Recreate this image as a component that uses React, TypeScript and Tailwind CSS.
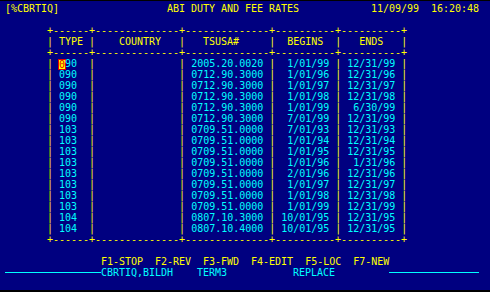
import React from "react";

type Kind = "y" | "c" | "cur" | "lineL" | "lineR";
type Seg = [number, string, Kind];

function Line({ segs }: { segs: Seg[] }) {
  const out: React.ReactNode[] = [];
  let col = 0;
  segs.forEach(([c, t, k], i) => {
    if (c > col) {
      out.push(<span key={"s" + i}>{" ".repeat(c - col)}</span>);
      col = c;
    }
    if (k === "y") {
      out.push(
        <span key={i} className="text-[#ffff00]">
          {t}
        </span>
      );
      col += t.length;
    } else if (k === "c") {
      out.push(
        <span key={i} className="text-[#00ffff]">
          {t}
        </span>
      );
      col += t.length;
    } else if (k === "cur") {
      out.push(
        <span
          key={i}
          className="inline-block w-[6px] h-[9px] leading-[9px] bg-[#ffff00] text-[#e00000] outline outline-1 outline-[#e00000] align-[-1px] text-center"
        >
          {t}
        </span>
      );
      col += 1;
    } else if (k === "lineL") {
      out.push(
        <span key={i} className="inline-block w-[96px] h-px bg-[#00ffff] align-[3px]" />
      );
      col += 16;
    } else {
      out.push(
        <span key={i} className="inline-block w-[90px] h-px bg-[#00ffff] align-[3px]" />
      );
      col += 15;
    }
  });
  return <div className="h-[11px] leading-[11px] whitespace-pre">{out}</div>;
}

const border: Seg[] = [
  [8, "+------+--------------+--------------+----------+----------+", "y"],
];

const rows: [string, string, string, string][] = [
  ["090", "2005.20.0020", "1/01/99", "12/31/99"],
  ["090", "0712.90.3000", "1/01/96", "12/31/96"],
  ["090", "0712.90.3000", "1/01/97", "12/31/97"],
  ["090", "0712.90.3000", "1/01/98", "12/31/98"],
  ["090", "0712.90.3000", "1/01/99", "6/30/99"],
  ["090", "0712.90.3000", "7/01/99", "12/31/99"],
  ["103", "0709.51.0000", "7/01/93", "12/31/93"],
  ["103", "0709.51.0000", "1/01/94", "12/31/94"],
  ["103", "0709.51.0000", "1/01/95", "12/31/95"],
  ["103", "0709.51.0000", "1/01/96", "1/31/96"],
  ["103", "0709.51.0000", "2/01/96", "12/31/96"],
  ["103", "0709.51.0000", "1/01/97", "12/31/97"],
  ["103", "0709.51.0000", "1/01/98", "12/31/98"],
  ["103", "0709.51.0000", "1/01/99", "12/31/99"],
  ["104", "0807.10.3000", "10/01/95", "12/31/95"],
  ["104", "0807.10.4000", "10/01/95", "12/31/95"],
];

function dataSegs(r: [string, string, string, string], first: boolean): Seg[] {
  const [t, ts, b, e] = r;
  const typeSegs: Seg[] = first
    ? [
        [10, "0", "cur"],
        [11, t.slice(1), "c"],
      ]
    : [[10, t, "c"]];
  return [
    [8, "|", "y"],
    ...typeSegs,
    [15, "|", "y"],
    [30, "|", "y"],
    [32, ts, "c"],
    [45, "|", "y"],
    [55 - b.length, b, "c"],
    [56, "|", "y"],
    [66 - e.length, e, "c"],
    [67, "|", "y"],
  ];
}

export default function App() {
  return (
    <div className="w-[490px] h-[292px] bg-black overflow-hidden">
      <div
        className="mt-px h-[289px] bg-[#000080] pt-[2px] text-[10px] tracking-[-0.02px] ml-[-1px]"
        style={{ fontFamily: '"DejaVu Sans Mono", "Liberation Mono", monospace' }}
      >
        <Line
          segs={[
            [1, "[%CBRTIQ]", "y"],
            [28, "ABI DUTY AND FEE RATES", "y"],
            [62, "11/09/99", "y"],
            [72, "16:20:48", "y"],
          ]}
        />
        <Line segs={[]} />
        <Line segs={border} />
        <Line
          segs={[
            [8, "| TYPE |", "y"],
            [20, "COUNTRY", "y"],
            [30, "|", "y"],
            [34, "TSUSA#", "y"],
            [45, "|", "y"],
            [48, "BEGINS", "y"],
            [56, "|", "y"],
            [60, "ENDS", "y"],
            [67, "|", "y"],
          ]}
        />
        <Line segs={border} />
        {rows.map((r, i) => (
          <Line key={i} segs={dataSegs(r, i === 0)} />
        ))}
        <Line segs={border} />
        <Line segs={[]} />
        <Line
          segs={[
            [17, "F1-STOP", "y"],
            [26, "F2-REV", "y"],
            [34, "F3-FWD", "y"],
            [42, "F4-EDIT", "y"],
            [51, "F5-LOC", "y"],
            [59, "F7-NEW", "y"],
          ]}
        />
        <Line
          segs={[
            [1, "", "lineL"],
            [17, "CBRTIQ,BILDH", "c"],
            [33, "TERM3", "c"],
            [49, "REPLACE", "c"],
            [65, "", "lineR"],
          ]}
        />
      </div>
    </div>
  );
}
